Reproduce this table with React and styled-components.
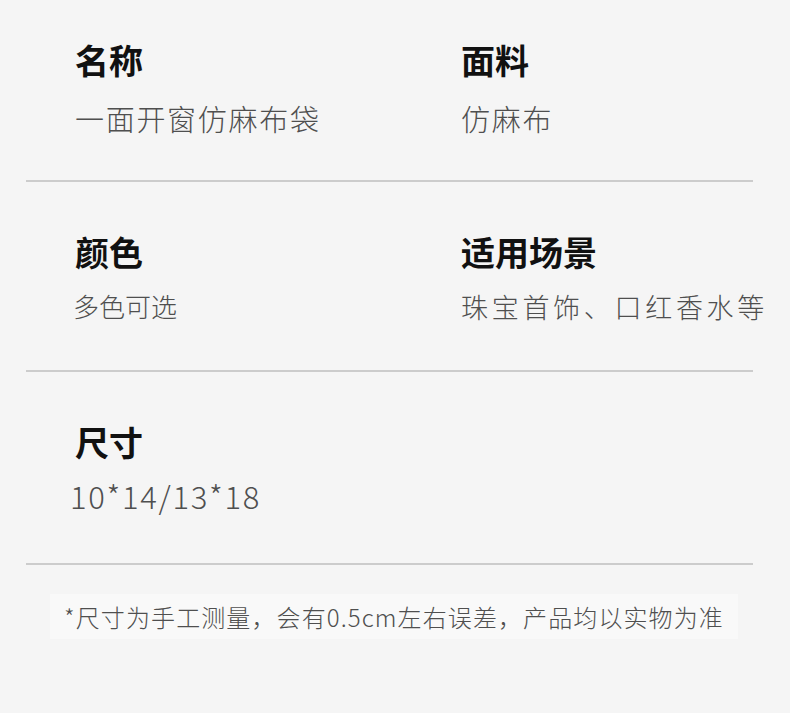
import React from 'react';
import styled, { createGlobalStyle } from 'styled-components';

const GlobalStyle = createGlobalStyle`
  html, body {
    margin: 0;
    padding: 0;
    background: #f5f5f5;
  }
  body {
    font-family: "Noto Sans CJK SC", "Noto Sans", sans-serif;
  }
`;

const Page = styled.div`
  width: 790px;
  min-height: 713px;
  background: #f5f5f5;
  padding-left: 26px;
  box-sizing: border-box;
`;

const Section = styled.section`
  width: 727px;
  display: grid;
  grid-template-columns: 386px 1fr;
  padding: ${(p) => p.$pad};
  padding-left: 49px;
  box-sizing: border-box;
  border-bottom: 2px solid #cccccc;
`;

const Field = styled.div`
  display: flex;
  flex-direction: column;
  align-items: flex-start;
  white-space: nowrap;
`;

const Label = styled.div`
  font-size: 34px;
  line-height: 1;
  font-weight: 700;
  color: #111;
  letter-spacing: 0;
`;

const Value = styled.div`
  margin-top: ${(p) => p.$gap}px;
  margin-left: ${(p) => p.$shift || 0}px;
  font-size: ${(p) => p.$size}px;
  letter-spacing: ${(p) => p.$spacing}px;
  line-height: 1;
  font-weight: 300;
  color: #4f4f4f;
`;

const Note = styled.div`
  display: inline-block;
  margin: 29px 0 0 24px;
  padding: 11px 14px 10px 14px;
  background: #f9f9f9;
  font-size: 24px;
  line-height: 1;
  letter-spacing: 1.1px;
  font-weight: 300;
  color: #4f4f4f;
  white-space: nowrap;
`;

const sections = [
  {
    pad: '43px 0 47px',
    fields: [
      { label: '名称', value: '一面开窗仿麻布袋', size: 29, spacing: 1.7, gap: 27 },
      { label: '面料', value: '仿麻布', size: 29, spacing: 1.7, gap: 27 },
    ],
  },
  {
    pad: '53px 0 50px',
    fields: [
      { label: '颜色', value: '多色可选', size: 26, spacing: 0, gap: 24, shift: -2 },
      { label: '适用场景', value: '珠宝首饰、口红香水等', size: 27, spacing: 3.7, gap: 24 },
    ],
  },
  {
    pad: '53px 0 52px',
    fields: [
      { label: '尺寸', value: '10*14/13*18', size: 31, spacing: 1.7, gap: 21, shift: -5 },
    ],
  },
];

export default function App() {
  return (
    <Page>
      <GlobalStyle />
      {sections.map((s, i) => (
        <Section key={i} $pad={s.pad}>
          {s.fields.map((f) => (
            <Field key={f.label}>
              <Label>{f.label}</Label>
              <Value $size={f.size} $spacing={f.spacing} $gap={f.gap} $shift={f.shift}>
                {f.value}
              </Value>
            </Field>
          ))}
        </Section>
      ))}
      <Note>*尺寸为手工测量，会有0.5cm左右误差，产品均以实物为准</Note>
    </Page>
  );
}
